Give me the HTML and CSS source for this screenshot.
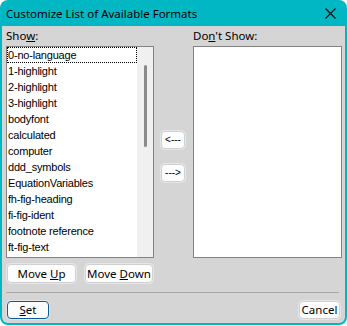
FILE: index.html
```html
<!DOCTYPE html>
<html>
<head>
<meta charset="utf-8">
<link rel="stylesheet" href="styles.css">
</head>
<body>
<div class="window">
  <div class="titlebar">
    <span class="title">Customize List of Available Formats</span>
    <svg class="close" width="11" height="11" viewBox="0 0 11 11"><path d="M0.5 0.5 L10.5 10.5 M10.5 0.5 L0.5 10.5" stroke="#000" stroke-width="1.1" fill="none"/></svg>
  </div>
  <div class="body">
    <div class="main">
      <div class="label label-left">Sho<u>w</u>:</div>
      <div class="label label-right">Do<u>n</u>'t Show:</div>
      <div class="listbox list-left">
        <ul class="items">
          <li class="focus">0-no-language</li>
          <li>1-highlight</li>
          <li>2-highlight</li>
          <li>3-highlight</li>
          <li>bodyfont</li>
          <li>calculated</li>
          <li>computer</li>
          <li>ddd_symbols</li>
          <li>EquationVariables</li>
          <li>fh-fig-heading</li>
          <li>fi-fig-ident</li>
          <li>footnote reference</li>
          <li>ft-fig-text</li>
        </ul>
        <div class="scrollbar"><div class="thumb"></div></div>
      </div>
      <div class="mid">
        <button class="btn arrow"><span>&lt;---</span></button>
        <button class="btn arrow"><span>---&gt;</span></button>
      </div>
      <div class="listbox list-right"></div>
      <div class="move-row">
        <button class="btn move-up"><span>Move <u>U</u>p</span></button>
        <button class="btn move-down"><span>Move <u>D</u>own</span></button>
      </div>
    </div>
    <div class="sep"></div>
    <div class="footer">
      <button class="btn btn-default set"><span><u>S</u>et</span></button>
      <button class="btn cancel"><span>Cancel</span></button>
    </div>
  </div>
</div>
</body>
</html>
```
FILE: styles.css
```css
* { box-sizing: border-box; }
html, body { margin: 0; padding: 0; background: #ffffff; }

.window {
  width: 347px;
  height: 325px;
  background: #00b7c3;
  border-radius: 8px;
  padding: 0 2px 2px 2px;
  display: flex;
  flex-direction: column;
  overflow: hidden;
  font-family: "Noto Sans", sans-serif;
  color: #000;
}

.titlebar {
  height: 26px;
  flex: none;
  display: flex;
  align-items: center;
  justify-content: space-between;
  padding: 0 9px 0 4px;
}
.title { font-size: 11.5px; }
.close { display: block; }

.body {
  flex: 1;
  background: #d5d5d5;
  border-radius: 0 0 6px 6px;
  padding: 0 3px 0 4px;
  display: flex;
  flex-direction: column;
}

.main {
  display: grid;
  grid-template-columns: 148px 39px 149px;
  grid-template-rows: 20px 212px auto;
}

.label {
  font-size: 11.5px;
  line-height: 20px;
}
.label-left { grid-column: 1; grid-row: 1; }
.label-right { grid-column: 3; grid-row: 1; }

.listbox {
  background: #ffffff;
  border: 1px solid #828282;
}
.list-left { grid-column: 1; grid-row: 2; display: flex; }
.list-right { grid-column: 3; grid-row: 2; }

.items {
  list-style: none;
  margin: 0;
  padding: 0;
  flex: 1;
  font-family: "Liberation Sans", Arial, sans-serif;
  font-size: 11px;
  letter-spacing: -0.2px;
}
.items li {
  height: 16px;
  line-height: 16px;
  padding-left: 1px;
  white-space: nowrap;
}
.items li.focus {
  outline: 1px dotted #000;
  outline-offset: -1px;
}

.scrollbar {
  width: 16px;
  background: #f0f0f0;
  padding: 18px 0 0 7px;
}
.thumb {
  width: 3px;
  height: 82px;
  background: #8a8a8a;
  border-radius: 2px;
}

.mid {
  grid-column: 2;
  grid-row: 2;
  display: flex;
  flex-direction: column;
  align-items: flex-start;
  padding: 85px 0 0 7px;
  gap: 15px;
}

.btn {
  font-family: "Noto Sans", sans-serif;
  font-size: 11.5px;
  color: #000;
  background: #fdfdfd;
  border: 1px solid #d0d0d0;
  border-radius: 4px;
  box-shadow: 0 0 0 1px #e6e6e6;
  padding: 0;
  margin: 0;
  line-height: 1;
  display: flex;
  align-items: center;
  justify-content: center;
  white-space: pre;
}
.arrow { width: 24px; height: 18px; font-size: 10px; font-family: "Liberation Sans", sans-serif; }

.move-row {
  grid-column: 1;
  grid-row: 3;
  display: flex;
  gap: 9px;
  padding: 6px 0 0 1px;
}
.move-up { width: 69px; height: 19px; }
.move-down { width: 68px; height: 19px; }

.sep {
  margin: 9px 3px 0 0;
  height: 1px;
  background: #a8a8a8;
}

.footer {
  display: flex;
  justify-content: space-between;
  padding: 8px 2px 0 1px;
}
.set { width: 42px; height: 18px; }
.btn-default { border-color: #0b5a9c; }
.cancel { width: 41px; height: 18px; }
```
